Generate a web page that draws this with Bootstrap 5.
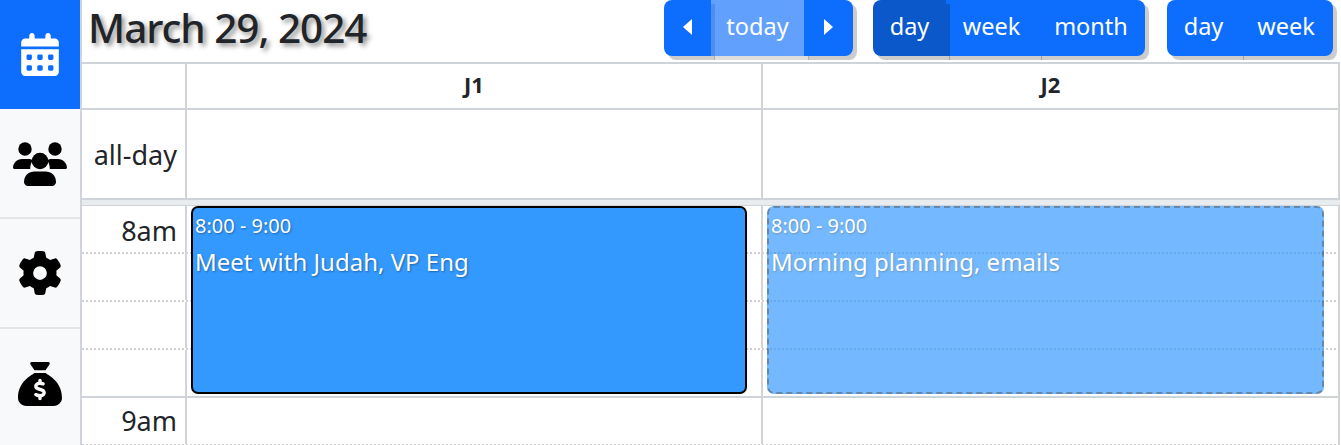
<!DOCTYPE html>
<html lang="en">
<head>
  <meta charset="UTF-8">
  <meta name="viewport" content="width=device-width, initial-scale=1.0">
  <title>Calendar</title>
  <link rel="stylesheet" href="https://cdn.jsdelivr.net/npm/bootstrap@5.3.2/dist/css/bootstrap.min.css">
  <style>
    html, body { height: 100%; overflow: hidden; }
    body { font-family: "Noto Sans", "Liberation Sans", sans-serif; color: #212529; background: #fff; }
    .side { width: 82px; flex: none; background: #f8f9fa; border-right: 2px solid #ced4da; }
    .side-item { display: flex; align-items: center; justify-content: center; height: 110px; border-bottom: 2px solid #e3e5e8; color: #000; }
    .side-item.on { height: 109px; background: #0d6efd; color: #fff; border-bottom: 0; }
    .side-item svg { fill: currentColor; display: block; }
    .side-item:last-child { border-bottom: 0; }
    .topbar { height: 62px; padding-left: 6px; }
    .cal-title { font-size: 40.5px; font-weight: 500; letter-spacing: -1.05px; line-height: 56px; margin: 0; text-shadow: 3px 3px 5px rgba(0,0,0,.45); }
    .tools { gap: 20px; margin-right: 8px; }
    .tools .btn-group { height: 56px; align-self: flex-start; }
    .tools .btn-group:last-child { margin-left: 2px; }
    .tools .btn { font-size: 23.500px; line-height: 1; padding: 0 0 3px; border: 0; border-radius: 8px; box-shadow: 4px 4px 0 rgba(0,0,0,.2); display: flex; align-items: center; justify-content: center; color: #fff; }
    .tools .btn.active { background: #0a58ca; }
    .tools .btn:disabled { opacity: .65; background: #0d6efd; }
    .b-prev { width: 47px; }
    .b-today { width: 95px; }
    .b-next { width: 49px; }
    .b-day { width: 73px; }
    .b-week { width: 93px; }
    .b-month { width: 108px; }
    .b-week2 { width: 94px; }
    .arrow { width: 0; height: 0; border-top: 8px solid transparent; border-bottom: 8px solid transparent; }
    .arrow.l { border-right: 9px solid #fff; }
    .arrow.r { border-left: 9px solid #fff; }
    .cal { border-top: 2px solid #ced4da; width: 1258px; }
    .cal-row { display: grid; grid-template-columns: 105px 576px 577px; border-bottom: 2px solid #ced4da; }
    .cal-row > div { border-right: 2px solid #ced4da; }
    .r-head { height: 46px; }
    .r-head > div { display: flex; align-items: center; justify-content: center; font-weight: 700; font-size: 22px; padding-bottom: 3px; }
    .r-all { height: 90px; }
    .axis-lbl { font-size: 27px; line-height: 46px; text-align: right; padding-right: 8px; }
    .r-all .axis-lbl { display: flex; align-items: center; justify-content: flex-end; padding-top: 1px; }
    .slot:first-child .axis-lbl { padding-top: 2px; }
    .divider { height: 6px; background: #e9ecef; border-bottom: 1px solid #ced4da; }
    .slot { display: grid; grid-template-columns: 105px 576px 577px; height: 48px; border-bottom: 2px dotted #cfcfcf; }
    .slot.hour { border-bottom: 2px solid #ced4da; }
    .slot > div { border-right: 2px solid #ced4da; height: 100%; }
    .slots { position: relative; }
    .ev { position: absolute; top: 0; height: 188px; border-radius: 7px; background: #39f; color: #fff; padding: 5px 2px; text-shadow: 1px 1px 2px rgba(0,0,0,.35); }
    .ev-a { left: 109px; width: 556px; border: 2px solid #000; }
    .ev-b { left: 685px; width: 557px; border: 2px dashed #1d5080; opacity: .68; }
    .ev-time { font-size: 20px; line-height: 26px; }
    .ev-name { font-size: 24px; line-height: 32px; margin-top: 7px; }
  </style>
</head>
<body>
  <div class="d-flex h-100">
    <!-- menu -->
    <div class="side">
      <div class="side-item on">
        <svg width="38" height="43" viewBox="0 0 448 512"><path d="M128 0c17.7 0 32 14.3 32 32V64H288V32c0-17.7 14.3-32 32-32s32 14.3 32 32V64h48c26.5 0 48 21.5 48 48v48H0V112C0 85.5 21.5 64 48 64H96V32c0-17.7 14.3-32 32-32zM0 192H448V464c0 26.5-21.5 48-48 48H48c-26.5 0-48-21.5-48-48V192zm64 80v32c0 8.8 7.2 16 16 16h32c8.8 0 16-7.2 16-16V272c0-8.8-7.2-16-16-16H80c-8.8 0-16 7.2-16 16zm128 0v32c0 8.8 7.2 16 16 16h32c8.8 0 16-7.2 16-16V272c0-8.8-7.2-16-16-16H208c-8.8 0-16 7.2-16 16zm144-16c-8.8 0-16 7.2-16 16v32c0 8.8 7.2 16 16 16h32c8.8 0 16-7.2 16-16V272c0-8.8-7.2-16-16-16H336zM64 400v32c0 8.8 7.2 16 16 16h32c8.8 0 16-7.2 16-16V400c0-8.8-7.2-16-16-16H80c-8.8 0-16 7.2-16 16zm144-16c-8.8 0-16 7.2-16 16v32c0 8.8 7.2 16 16 16h32c8.8 0 16-7.2 16-16V400c0-8.8-7.2-16-16-16H208zm112 16v32c0 8.8 7.2 16 16 16h32c8.8 0 16-7.2 16-16V400c0-8.8-7.2-16-16-16H336c-8.8 0-16 7.2-16 16z"/></svg>
      </div>
      <div class="side-item">
        <svg width="54" height="45" viewBox="0 0 54 45"><circle cx="12" cy="8" r="6.7"/><circle cx="42" cy="8" r="6.7"/><path d="M0 27c0-5 4-9 9-9h6c2 0 3.500.4 5 1.200-1.800 2.400-2.800 5-2.800 8.800H1zM54 27c0-5-4-9-9-9h-6c-2 0-3.500.4-5 1.200 1.800 2.400 2.800 5 2.800 8.800H53z"/><circle cx="27" cy="20" r="8.300"/><path d="M11 41c0-6.500 5-10.500 10.500-10.500h11C38 30.500 43 34.500 43 41c0 2.200-1.800 4-4 4H15c-2.200 0-4-1.800-4-4z"/></svg>
      </div>
      <div class="side-item">
        <svg width="44" height="44" viewBox="0 0 512 512"><path d="M495.900 166.600c3.200 8.700 .5 18.400-6.400 24.600l-43.300 39.400c1.100 8.300 1.700 16.800 1.700 25.400s-.6 17.100-1.700 25.400l43.300 39.400c6.900 6.200 9.600 15.900 6.400 24.600c-4.400 11.900-9.700 23.300-15.800 34.300l-4.700 8.100c-6.600 11-14 21.400-22.100 31.200c-5.900 7.200-15.700 9.600-24.500 6.800l-55.700-17.700c-13.400 10.300-28.200 18.900-44 25.400l-12.500 57.100c-2 9.100-9 16.300-18.200 17.800c-13.800 2.300-28 3.500-42.500 3.500s-28.700-1.200-42.500-3.500c-9.200-1.500-16.200-8.700-18.200-17.800l-12.500-57.100c-15.800-6.500-30.600-15.100-44-25.400L83.100 425.900c-8.800 2.800-18.600 .3-24.500-6.800c-8.100-9.800-15.500-20.200-22.100-31.200l-4.700-8.100c-6.100-11-11.400-22.400-15.800-34.300c-3.200-8.700-.5-18.400 6.400-24.600l43.300-39.400C64.600 273.100 64 264.600 64 256s.6-17.100 1.700-25.400L22.400 191.200c-6.900-6.200-9.600-15.900-6.400-24.600c4.400-11.900 9.700-23.300 15.800-34.300l4.700-8.100c6.600-11 14-21.400 22.100-31.200c5.900-7.200 15.700-9.600 24.500-6.800l55.700 17.700c13.400-10.300 28.200-18.900 44-25.400l12.500-57.100c2-9.100 9-16.300 18.200-17.800C227.300 1.200 241.500 0 256 0s28.700 1.200 42.500 3.500c9.200 1.500 16.200 8.700 18.200 17.800l12.500 57.100c15.800 6.500 30.600 15.100 44 25.400l55.700-17.700c8.800-2.800 18.600-.3 24.500 6.800c8.100 9.800 15.500 20.200 22.100 31.200l4.700 8.100c6.100 11 11.400 22.400 15.800 34.300zM256 336a80 80 0 1 0 0-160 80 80 0 1 0 0 160z"/></svg>
      </div>
      <div class="side-item">
        <svg width="44" height="44" viewBox="0 0 512 512"><path d="M320 96H192L144.600 24.900C137.500 14.200 145.100 0 157.900 0H354.100c12.800 0 20.400 14.200 13.300 24.900L320 96zM192 128H320c3.800 2.500 8.100 5.300 13 8.400C389.700 172.700 512 250.900 512 416c0 53-43 96-96 96H96c-53 0-96-43-96-96C0 250.900 122.300 172.700 179 136.400l0 0 0 0c4.800-3.100 9.200-5.900 13-8.400zm84 88c0-11-9-20-20-20s-20 9-20 20v14c-7.600 1.700-15.200 4.400-22.200 8.500c-13.900 8.300-25.900 22.800-25.800 43.900c.1 20.300 12 33.100 24.700 40.700c11 6.600 24.700 10.800 35.600 14l1.700 .5c12.600 3.800 21.800 6.800 28 10.700c5.100 3.200 5.800 5.400 5.900 8.200c.1 5-1.800 8-5.900 10.500c-5 3.100-12.900 5-21.400 4.700c-11.100-.4-21.500-3.900-35.100-8.500c-2.300-.8-4.700-1.600-7.200-2.400c-10.500-3.500-21.800 2.200-25.300 12.600s2.200 21.800 12.600 25.300c1.900 .6 4 1.300 6.100 2.100l0 0 0 0c8.300 2.900 17.900 6.200 28.200 8.400V424c0 11 9 20 20 20s20-9 20-20V410.200c8-1.700 16-4.500 23.200-9c14.300-8.900 25.100-24.100 24.800-45c-.3-20.300-11.700-33.400-24.600-41.600c-11.500-7.200-25.900-11.600-37.100-15l0 0-.7-.2c-12.800-3.900-21.900-6.700-28.300-10.500c-5.200-3.100-5.300-4.900-5.300-6.700c0-3.700 1.400-6.500 6.200-9.300c5.400-3.200 13.600-5.100 21.500-5c9.600 .1 20.200 2.200 31.200 5.200c10.700 2.800 21.600-3.500 24.500-14.200s-3.500-21.600-14.200-24.500c-6.500-1.700-13.700-3.400-21.100-4.700V216z"/></svg>
      </div>
    </div>

    <div class="flex-grow-1">
      <!-- toolbar -->
      <div class="topbar d-flex justify-content-between">
        <h2 class="cal-title">March 29, 2024</h2>
        <div class="tools d-flex">
          <div class="btn-group">
            <button class="btn btn-primary b-prev"><span class="arrow l"></span></button>
            <button class="btn btn-primary b-today" disabled>today</button>
            <button class="btn btn-primary b-next"><span class="arrow r"></span></button>
          </div>
          <div class="btn-group">
            <button class="btn btn-primary b-day active">day</button>
            <button class="btn btn-primary b-week">week</button>
            <button class="btn btn-primary b-month">month</button>
          </div>
          <div class="btn-group">
            <button class="btn btn-primary b-day">day</button>
            <button class="btn btn-primary b-week2">week</button>
          </div>
        </div>
      </div>

      <!-- calendar -->
      <div class="cal">
        <div class="cal-row r-head"><div></div><div>J1</div><div>J2</div></div>
        <div class="cal-row r-all"><div class="axis-lbl">all-day</div><div></div><div></div></div>
        <div class="divider"></div>
        <div class="slots">
          <div class="slot"><div class="axis-lbl">8am</div><div></div><div></div></div>
          <div class="slot"><div></div><div></div><div></div></div>
          <div class="slot"><div></div><div></div><div></div></div>
          <div class="slot hour"><div></div><div></div><div></div></div>
          <div class="slot"><div class="axis-lbl">9am</div><div></div><div></div></div>
          <div class="ev ev-a">
            <div class="ev-time">8:00 - 9:00</div>
            <div class="ev-name">Meet with Judah, VP Eng</div>
          </div>
          <div class="ev ev-b">
            <div class="ev-time">8:00 - 9:00</div>
            <div class="ev-name">Morning planning, emails</div>
          </div>
        </div>
      </div>
    </div>
  </div>
  <script src="https://cdn.jsdelivr.net/npm/bootstrap@5.3.2/dist/js/bootstrap.bundle.min.js"></script>
</body>
</html>
